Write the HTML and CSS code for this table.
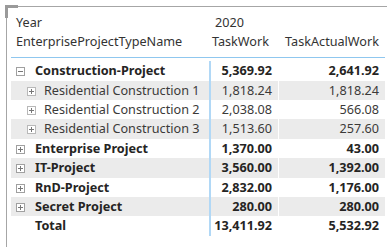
FILE: index.html
```html
<!DOCTYPE html>
<html lang="en">
<head>
    <meta charset="UTF-8">
    <title>Task Work Matrix</title>
    <link rel="stylesheet" href="styles.css">
</head>
<body>
    <div class="visual">
        <span class="corner"></span>
        <div class="matrix">
            <!-- Column headers -->
            <div class="head">
                <div class="row">
                    <div class="cell name">Year</div>
                    <div class="cell year">2020</div>
                </div>
                <div class="row">
                    <div class="cell name">EnterpriseProjectTypeName</div>
                    <div class="cell num head-work">TaskWork</div>
                    <div class="cell num">TaskActualWork</div>
                </div>
            </div>

            <!-- Values -->
            <div class="body">
                <div class="row top">
                    <div class="cell name"><span class="toggle open"></span>Construction-Project</div>
                    <div class="cell num first-col">5,369.92</div>
                    <div class="cell num">2,641.92</div>
                </div>
                <div class="row child alt">
                    <div class="cell name"><span class="toggle"></span>Residential Construction 1</div>
                    <div class="cell num first-col">1,818.24</div>
                    <div class="cell num">1,818.24</div>
                </div>
                <div class="row child">
                    <div class="cell name"><span class="toggle"></span>Residential Construction 2</div>
                    <div class="cell num first-col">2,038.08</div>
                    <div class="cell num">566.08</div>
                </div>
                <div class="row child alt">
                    <div class="cell name"><span class="toggle"></span>Residential Construction 3</div>
                    <div class="cell num first-col">1,513.60</div>
                    <div class="cell num">257.60</div>
                </div>
                <div class="row top">
                    <div class="cell name"><span class="toggle"></span>Enterprise Project</div>
                    <div class="cell num first-col">1,370.00</div>
                    <div class="cell num">43.00</div>
                </div>
                <div class="row top alt">
                    <div class="cell name"><span class="toggle"></span>IT-Project</div>
                    <div class="cell num first-col">3,560.00</div>
                    <div class="cell num">1,392.00</div>
                </div>
                <div class="row top">
                    <div class="cell name"><span class="toggle"></span>RnD-Project</div>
                    <div class="cell num first-col">2,832.00</div>
                    <div class="cell num">1,176.00</div>
                </div>
                <div class="row top alt">
                    <div class="cell name"><span class="toggle"></span>Secret Project</div>
                    <div class="cell num first-col">280.00</div>
                    <div class="cell num">280.00</div>
                </div>
                <div class="row top total">
                    <div class="cell name">Total</div>
                    <div class="cell num first-col">13,411.92</div>
                    <div class="cell num">5,532.92</div>
                </div>
            </div>
        </div>
    </div>
</body>
</html>
```

FILE: styles.css
```css
body {
    margin: 0;
    font-family: "Noto Sans", "Open Sans", sans-serif;
    font-size: 12.65px;
    color: #333;
    background: #fff;
}

.visual {
    position: relative;
    margin: 6px 0 0 6px;
    height: 241px;
    border-left: 1px solid #a6a6a6;
    border-top: 1px solid #a6a6a6;
}

/* focus bracket in the top left corner */
.corner {
    position: absolute;
    left: -2px;
    top: -2px;
    width: 10px;
    height: 10px;
    border-left: 3px solid #9a9a9a;
    border-top: 3px solid #9a9a9a;
}

.matrix {
    margin-left: 4px;
    width: 374px;
}

.row {
    display: grid;
    grid-template-columns: 198px 69px 107px;
    height: 19.4px;
    line-height: 19.4px;
}

.cell {
    white-space: nowrap;
    overflow: hidden;
}

.name {
    padding-left: 5px;
}

.num {
    text-align: right;
    padding-right: 6px;
}

.head {
    padding: 6px 0 6px;
    border-bottom: 1px solid #8fc7ef;
}

.head .row {
    height: 19px;
    line-height: 19px;
}

.year {
    grid-column: 2 / 4;
    padding-left: 6px;
}

.head-work {
    padding-right: 9px;
}

.body {
    padding-top: 3.3px;
}

.first-col {
    border-left: 2px solid #b1d8f6;
}

.alt .cell {
    background: #ebebeb;
}

.alt .num + .num {
    border-left: 1px solid #fff;
}

.top {
    font-weight: bold;
    color: #252423;
}

.child {
    color: #3b3a39;
}

.child .name {
    padding-left: 16px;
}

.total .name {
    padding-left: 24px;
}

/* expand / collapse boxes */
.toggle {
    display: inline-block;
    position: relative;
    width: 7px;
    height: 7px;
    border: 1px solid #a0a0a0;
    background: #fff;
    margin-right: 10px;
    vertical-align: -1px;
}

.child .toggle {
    border-color: #b8b8b8;
    margin-right: 8px;
}

.toggle::before,
.toggle::after {
    content: "";
    position: absolute;
    background: #777;
}

.toggle::before {
    left: 1px;
    top: 3px;
    width: 5px;
    height: 1px;
}

.toggle::after {
    left: 3px;
    top: 1px;
    width: 1px;
    height: 5px;
}

.toggle.open::after {
    display: none;
}
```
